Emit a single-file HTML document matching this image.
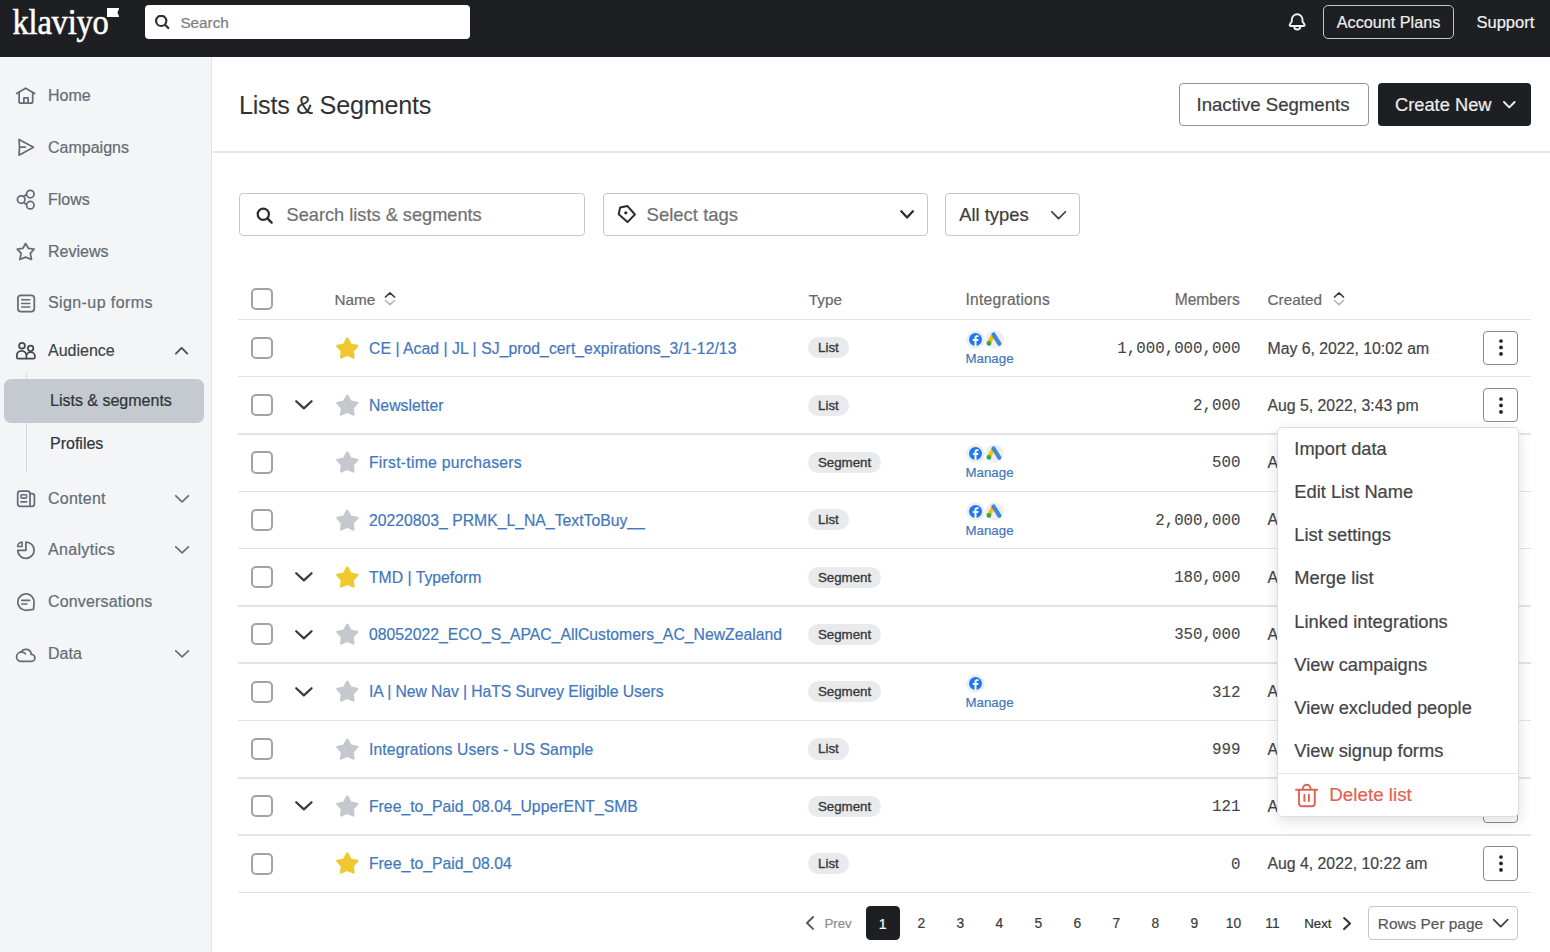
<!DOCTYPE html>
<html><head><meta charset="utf-8"><style>
html,body{margin:0;padding:0;width:1550px;height:952px;overflow:hidden;background:#fff;}
body{position:relative;font-family:"Liberation Sans", sans-serif;}
.t{position:absolute;line-height:1;white-space:nowrap;-webkit-text-stroke:0.2px currentColor;}
.r{position:absolute;display:block;}
</style></head><body>
<div class="r" style="left:0.00px;top:0.00px;width:1550.00px;height:56.50px;background:#1e1f22"></div>
<div class="t" style="left:12.50px;top:6.58px;font-size:32.5px;color:#fff;font-weight:400;font-family:'Liberation Serif', serif;transform:scaleY(1.12);transform-origin:0 80%;letter-spacing:-0.2px;-webkit-text-stroke:0.5px #fff">klaviyo</div>
<svg class="r" style="left:106.80px;top:7.90px;" width="12.4" height="9.2" viewBox="0 0 12.4 9.2" fill="none"><path d="M0 0H12.4L10.4 4.6L12.4 9.2H0Z" fill="#fff"/></svg>
<div class="r" style="left:145.30px;top:5.30px;width:324.70px;height:33.50px;background:#fff;border-radius:4px"></div>
<svg class="r" style="left:150.00px;top:15.00px;" width="20" height="20" viewBox="150 15 20 20" fill="none"><circle cx="161.2" cy="20.9" r="5.1" stroke="#303134" stroke-width="2.2"/><path d="M165 24.7L168.3 28" stroke="#303134" stroke-width="2.3" stroke-linecap="round"/></svg>
<div class="t" style="left:180.40px;top:14.95px;font-size:15.3px;color:#7b7c7e;font-weight:400;">Search</div>
<svg class="r" style="left:1280px;top:5px" width="30" height="35" viewBox="1280 5 30 35" fill="none"><path d="M1291.8 21.5V19.6A5.35 5.35 0 0 1 1302.5 19.6V21.5L1304.4 24.3Q1305.2 26 1303.4 26H1290.9Q1289.1 26 1289.9 24.3Z" stroke="#f0f0f0" stroke-width="1.9" stroke-linejoin="round"/><path d="M1294.2 26.4A3.05 3.05 0 0 0 1300.3 26.4" stroke="#f0f0f0" stroke-width="1.9" stroke-linecap="round"/></svg>
<div class="r" style="left:1322.90px;top:4.90px;width:131.30px;height:34.50px;border:1.7px solid #c4c5c7;border-radius:5px;box-sizing:border-box"></div>
<div class="t" style="left:1336.80px;top:14.19px;font-size:16.2px;color:#efefef;font-weight:400;">Account Plans</div>
<div class="t" style="left:1476.50px;top:14.13px;font-size:16.5px;color:#efefef;font-weight:400;">Support</div>
<div class="r" style="left:0.00px;top:56.50px;width:212.00px;height:895.50px;background:#f4f5f7"></div>
<div class="r" style="left:211.00px;top:56.50px;width:1.40px;height:895.50px;background:#e3e5e8"></div>
<div class="t" style="left:48.00px;top:88.06px;font-size:16px;color:#636c75;font-weight:400;letter-spacing:0px">Home</div>
<div class="t" style="left:48.00px;top:140.06px;font-size:16px;color:#636c75;font-weight:400;letter-spacing:0px">Campaigns</div>
<div class="t" style="left:48.00px;top:191.76px;font-size:16px;color:#636c75;font-weight:400;letter-spacing:0px">Flows</div>
<div class="t" style="left:48.00px;top:243.66px;font-size:16px;color:#636c75;font-weight:400;letter-spacing:0px">Reviews</div>
<div class="t" style="left:48.00px;top:295.46px;font-size:16px;color:#636c75;font-weight:400;letter-spacing:0.4px">Sign-up forms</div>
<div class="t" style="left:48.00px;top:343.06px;font-size:16px;color:#3e444a;font-weight:400;letter-spacing:0px">Audience</div>
<div class="t" style="left:48.00px;top:490.66px;font-size:16px;color:#636c75;font-weight:400;letter-spacing:0.25px">Content</div>
<div class="t" style="left:48.00px;top:542.06px;font-size:16px;color:#636c75;font-weight:400;letter-spacing:0.33px">Analytics</div>
<div class="t" style="left:48.00px;top:594.36px;font-size:16px;color:#636c75;font-weight:400;letter-spacing:0.17px">Conversations</div>
<div class="t" style="left:48.00px;top:646.26px;font-size:16px;color:#636c75;font-weight:400;letter-spacing:0px">Data</div>
<svg class="r" style="left:0;top:0" width="60" height="700" viewBox="0 0 60 700" fill="none">
<path d="M16.6 93.5L25.6 88.2L34.7 93.5" stroke="#646d77" stroke-width="1.75" stroke-linecap="round" stroke-linejoin="round"/>
<path d="M19.1 91.8V101.5Q19.1 103.2 20.8 103.2H31Q32.7 103.2 32.7 101.5V91.8M23.9 103.2V97.8H28.1V103.2" stroke="#646d77" stroke-width="1.75" stroke-linejoin="round"/>
<path d="M19 139.5L33.5 147.2L19 155.2Q20.1 147.2 19 139.5ZM19.9 147.2H25.3" stroke="#646d77" stroke-width="1.75" stroke-linejoin="round" stroke-linecap="round"/>
<circle cx="21.2" cy="199.5" r="3.75" stroke="#646d77" stroke-width="1.75"/>
<circle cx="30.3" cy="194.1" r="3.75" stroke="#646d77" stroke-width="1.75"/>
<circle cx="30.3" cy="205.2" r="3.75" stroke="#646d77" stroke-width="1.75"/>
<path d="M23.5 196.5L26.8 194.4M23.5 202.5L26.8 204.5" stroke="#646d77" stroke-width="1.75"/>
<path d="M25.6 243.5L28.4 248.3L34.1 249.2L30.3 253.4L31.5 259.5L25.6 257.1L19.9 259.5L21.1 253.4L17.3 249.2L22.9 248.3Z" stroke="#646d77" stroke-width="1.75" stroke-linejoin="round"/>
<rect x="17.9" y="295.3" width="16.4" height="16.2" rx="3" stroke="#646d77" stroke-width="1.75"/>
<path d="M21.7 299.7H29.9M21.7 303.4H29.9M21.7 307H29.9" stroke="#646d77" stroke-width="1.5" stroke-linecap="round"/>
<circle cx="22" cy="345.8" r="2.9" stroke="#44484d" stroke-width="1.75"/>
<circle cx="30.6" cy="348.3" r="2.75" stroke="#44484d" stroke-width="1.75"/>
<path d="M26.4 358.7H18.3Q16.8 358.7 16.8 357.2V355.6A4.8 4.8 0 0 1 26.4 355.6V358.7M26.4 356.3A4.25 4.25 0 0 1 34.9 356.3V357.2Q34.9 358.7 33.4 358.7H26.4" stroke="#44484d" stroke-width="1.75" stroke-linejoin="round"/>
<path d="M30 506.3H20.2Q17.7 506.3 17.7 503.8V493.5Q17.7 491 20.2 491H27.5Q30 491 30 493.5V506.3M30 493.6H32Q34.4 493.6 34.4 496V504Q34.4 506.3 32 506.3H30" stroke="#646d77" stroke-width="1.75" stroke-linejoin="round"/>
<rect x="20.9" y="494.8" width="5.8" height="3.3" rx="1" stroke="#646d77" stroke-width="1.6"/>
<path d="M20.9 501.9H26.7" stroke="#646d77" stroke-width="1.6" stroke-linecap="round"/>
<path d="M25.9 542A8.2 8.2 0 1 1 17.7 550.3H25.9Z" stroke="#646d77" stroke-width="1.75" stroke-linejoin="round"/>
<path d="M17.6 546.5H22.1V542.1A4.5 4.5 0 0 0 17.6 546.5Z" stroke="#646d77" stroke-width="1.6" stroke-linejoin="round"/>
<path d="M25.9 610.3A8.2 8.2 0 1 1 34 603.8L33.5 609.4Z" stroke="#646d77" stroke-width="1.75" stroke-linejoin="round"/>
<path d="M21.7 600.4H29.7M21.7 604H26.9" stroke="#646d77" stroke-width="1.6" stroke-linecap="round"/>
<path d="M21.2 661.4A4.6 4.6 0 0 1 21.2 652.2A5.3 5.3 0 0 1 31.2 654.4A3.5 3.5 0 0 1 31.6 661.4Z" stroke="#646d77" stroke-width="1.75" stroke-linejoin="round"/>
<path d="M20.4 651.9Q23.5 651.6 25.4 653.8" stroke="#646d77" stroke-width="1.75" stroke-linecap="round"/>
</svg>
<svg class="r" style="left:173.30px;top:344.70px" width="17.20" height="11.50" viewBox="173.30 344.70 17.20 11.50" fill="none"><path d="M176.20 353.30L181.90 347.60L187.60 353.30" stroke="#4a4f55" stroke-width="1.9" stroke-linecap="round" stroke-linejoin="round"/></svg>
<svg class="r" style="left:173.10px;top:492.50px" width="18.20" height="11.60" viewBox="173.10 492.50 18.20 11.60" fill="none"><path d="M175.90 495.30L182.20 501.30L188.50 495.30" stroke="#6a737c" stroke-width="1.8" stroke-linecap="round" stroke-linejoin="round"/></svg>
<svg class="r" style="left:173.10px;top:543.90px" width="18.20" height="11.60" viewBox="173.10 543.90 18.20 11.60" fill="none"><path d="M175.90 546.70L182.20 552.70L188.50 546.70" stroke="#6a737c" stroke-width="1.8" stroke-linecap="round" stroke-linejoin="round"/></svg>
<svg class="r" style="left:173.10px;top:648.10px" width="18.20" height="11.60" viewBox="173.10 648.10 18.20 11.60" fill="none"><path d="M175.90 650.90L182.20 656.90L188.50 650.90" stroke="#6a737c" stroke-width="1.8" stroke-linecap="round" stroke-linejoin="round"/></svg>
<div class="r" style="left:26.00px;top:373.00px;width:1.30px;height:99.00px;background:#d3d6da"></div>
<div class="r" style="left:4.20px;top:379.20px;width:199.60px;height:43.70px;background:#c5c9d0;border-radius:7px"></div>
<div class="t" style="left:50.00px;top:393.06px;font-size:16px;color:#2f3439;font-weight:400;">Lists &amp; segments</div>
<div class="t" style="left:50.00px;top:436.16px;font-size:16px;color:#2f3439;font-weight:400;">Profiles</div>
<div class="t" style="left:239.00px;top:93.17px;font-size:25.2px;color:#313235;font-weight:400;letter-spacing:-0.25px;-webkit-text-stroke:0">Lists &amp; Segments</div>
<div class="r" style="left:213.00px;top:151.00px;width:1337.00px;height:1.50px;background:#e4e6ea"></div>
<div class="r" style="left:1179.00px;top:83.00px;width:189.50px;height:42.70px;border:1.7px solid #939497;border-radius:4px;box-sizing:border-box;background:#fff"></div>
<div class="t" style="left:1196.50px;top:95.76px;font-size:18.6px;color:#3a3b3e;font-weight:400;">Inactive Segments</div>
<div class="r" style="left:1377.60px;top:83.00px;width:153.40px;height:42.70px;background:#1e1f22;border-radius:4px"></div>
<div class="t" style="left:1395.00px;top:96.01px;font-size:18.3px;color:#ececec;font-weight:400;">Create New</div>
<svg class="r" style="left:1501.45px;top:98.55px" width="16.60" height="11.40" viewBox="1501.45 98.55 16.60 11.40" fill="none"><path d="M1504.45 101.55L1509.75 106.95L1515.05 101.55" stroke="#ececec" stroke-width="2" stroke-linecap="round" stroke-linejoin="round"/></svg>
<div class="r" style="left:238.60px;top:193.30px;width:346.40px;height:43.20px;border:1.5px solid #c6c7c9;border-radius:4px;box-sizing:border-box;background:#fff"></div>
<div class="r" style="left:603.20px;top:193.30px;width:324.80px;height:43.20px;border:1.5px solid #c6c7c9;border-radius:4px;box-sizing:border-box;background:#fff"></div>
<div class="r" style="left:945.40px;top:193.30px;width:134.20px;height:43.20px;border:1.5px solid #c6c7c9;border-radius:4px;box-sizing:border-box;background:#fff"></div>
<svg class="r" style="left:255.50px;top:207.00px;" width="18" height="17" viewBox="0 0 18 17" fill="none"><circle cx="7.3" cy="7.3" r="5.6" stroke="#2b2c2e" stroke-width="2.2"/><path d="M11.4 11.4L15.6 15.6" stroke="#2b2c2e" stroke-width="2.4" stroke-linecap="round"/></svg>
<div class="t" style="left:286.60px;top:206.39px;font-size:18.2px;color:#6f7072;font-weight:400;">Search lists &amp; segments</div>
<svg class="r" style="left:600px;top:190px" width="50" height="50" viewBox="600 190 50 50" fill="none"><path d="M620.1 207.6L627.6 206.1L634.9 214.5L627.5 222.1L618.7 214.2Z" stroke="#2b2c2e" stroke-width="2" stroke-linejoin="round"/><circle cx="625.8" cy="212.8" r="1.6" fill="#2b2c2e"/></svg>
<div class="t" style="left:646.60px;top:206.14px;font-size:18.5px;color:#6f7072;font-weight:400;">Select tags</div>
<svg class="r" style="left:897.50px;top:208.30px" width="18.20" height="12.80" viewBox="897.50 208.30 18.20 12.80" fill="none"><path d="M900.80 211.60L906.60 217.80L912.40 211.60" stroke="#2b2c2e" stroke-width="2.3" stroke-linecap="round" stroke-linejoin="round"/></svg>
<div class="t" style="left:959.20px;top:206.22px;font-size:18.4px;color:#3c3d40;font-weight:400;">All types</div>
<svg class="r" style="left:1048.70px;top:208.85px" width="19.20" height="12.30" viewBox="1048.70 208.85 19.20 12.30" fill="none"><path d="M1051.45 211.60L1058.30 218.40L1065.15 211.60" stroke="#3c3d40" stroke-width="1.75" stroke-linecap="round" stroke-linejoin="round"/></svg>
<div class="r" style="left:251.20px;top:287.95px;width:21.90px;height:22.20px;border:2px solid #a2a3a5;border-radius:5px;box-sizing:border-box;background:#fff"></div>
<div class="t" style="left:334.50px;top:291.85px;font-size:15.3px;color:#67686b;font-weight:400;">Name</div>
<svg class="r" style="left:384.00px;top:291.00px;" width="12" height="15.5" viewBox="0 0 12 15.5" fill="none"><path d="M1.5 6L6 1.8L10.5 6" stroke="#3a3b3d" stroke-width="1.7" stroke-linecap="round" stroke-linejoin="round"/><path d="M1.5 9.5L6 13.7L10.5 9.5" stroke="#b3b7bd" stroke-width="1.6" stroke-linecap="round" stroke-linejoin="round"/></svg>
<div class="t" style="left:808.80px;top:291.85px;font-size:15.3px;color:#67686b;font-weight:400;">Type</div>
<div class="t" style="left:965.50px;top:291.59px;font-size:15.6px;color:#67686b;font-weight:400;letter-spacing:0.25px">Integrations</div>
<div class="t" style="right:310.30px;top:291.59px;font-size:15.6px;color:#67686b;font-weight:400;">Members</div>
<div class="t" style="left:1267.50px;top:291.85px;font-size:15.3px;color:#67686b;font-weight:400;">Created</div>
<svg class="r" style="left:1332.50px;top:291.00px;" width="12" height="15.5" viewBox="0 0 12 15.5" fill="none"><path d="M1.5 6L6 1.8L10.5 6" stroke="#3a3b3d" stroke-width="1.7" stroke-linecap="round" stroke-linejoin="round"/><path d="M1.5 9.5L6 13.7L10.5 9.5" stroke="#b3b7bd" stroke-width="1.6" stroke-linecap="round" stroke-linejoin="round"/></svg>
<div class="r" style="left:238.00px;top:318.65px;width:1293.00px;height:1.50px;background:#e2e4e8"></div>
<div class="r" style="left:238.00px;top:375.95px;width:1293.00px;height:1.50px;background:#e2e4e8"></div>
<div class="r" style="left:238.00px;top:433.25px;width:1293.00px;height:1.50px;background:#e2e4e8"></div>
<div class="r" style="left:238.00px;top:490.55px;width:1293.00px;height:1.50px;background:#e2e4e8"></div>
<div class="r" style="left:238.00px;top:547.85px;width:1293.00px;height:1.50px;background:#e2e4e8"></div>
<div class="r" style="left:238.00px;top:605.15px;width:1293.00px;height:1.50px;background:#e2e4e8"></div>
<div class="r" style="left:238.00px;top:662.45px;width:1293.00px;height:1.50px;background:#e2e4e8"></div>
<div class="r" style="left:238.00px;top:719.75px;width:1293.00px;height:1.50px;background:#e2e4e8"></div>
<div class="r" style="left:238.00px;top:777.05px;width:1293.00px;height:1.50px;background:#e2e4e8"></div>
<div class="r" style="left:238.00px;top:834.35px;width:1293.00px;height:1.50px;background:#e2e4e8"></div>
<div class="r" style="left:238.00px;top:891.65px;width:1293.00px;height:1.50px;background:#e2e4e8"></div>
<div class="r" style="left:251.20px;top:336.80px;width:21.90px;height:22.20px;border:2px solid #a2a3a5;border-radius:5px;box-sizing:border-box;background:#fff"></div>
<svg class="r" style="left:335.50px;top:336.60px;" width="23" height="24" viewBox="0 0 23 24" fill="none"><path d="M11.30 1.70L14.59 7.57L21.19 8.89L16.63 13.83L17.41 20.51L11.30 17.70L5.19 20.51L5.97 13.83L1.41 8.89L8.01 7.57Z" fill="#efc72f" stroke="#efc72f" stroke-width="2.4" stroke-linejoin="round"/></svg>
<div class="t" style="left:369.00px;top:340.67px;font-size:15.75px;color:#4277bc;font-weight:400;letter-spacing:0.04px">CE | Acad | JL | SJ_prod_cert_expirations_3/1-12/13</div>
<div class="r" style="left:807.80px;top:337.30px;width:41.20px;height:21.20px;background:#e8eaed;border-radius:11px"></div>
<div class="t" style="left:828.40px;top:341.34px;font-size:13.3px;color:#38393b;font-weight:400;transform:translateX(-50%);-webkit-text-stroke:0.35px #38393b">List</div>
<svg class="r" style="left:966.40px;top:329.80px;" width="19" height="19" viewBox="0 0 19 19" fill="none"><circle cx="9.5" cy="9.5" r="9.3" fill="#eceef1"/><circle cx="9.5" cy="9.5" r="6.5" fill="#1f78ef"/><path d="M10.5 16V11H12.2L12.45 9.1H10.5V7.9C10.5 7.35 10.7 7 11.45 7H12.5V5.3C12.3 5.25 11.65 5.2 11 5.2C9.5 5.2 8.5 6.1 8.5 7.7V9.1H6.8V11H8.5V16Z" fill="#fff"/></svg>
<svg class="r" style="left:984.50px;top:329.80px;" width="19" height="19" viewBox="0 0 19 19" fill="none"><circle cx="9.5" cy="9.5" r="9.3" fill="#eceef1"/><path d="M8.3 5L4.3 12.5" stroke="#fbbc04" stroke-width="4" stroke-linecap="round"/><path d="M8.6 4.5L14.3 13.7" stroke="#3d87db" stroke-width="4.2" stroke-linecap="round"/><circle cx="3.9" cy="13.4" r="2.4" fill="#34a853"/></svg>
<div class="t" style="left:965.50px;top:351.84px;font-size:13.3px;color:#4277bc;font-weight:400;">Manage</div>
<div class="t" style="right:309.50px;top:341.80px;font-size:15.8px;color:#454649;font-weight:400;font-family:'Liberation Mono', monospace;-webkit-text-stroke:0.1px #454649">1,000,000,000</div>
<div class="t" style="left:1267.50px;top:340.53px;font-size:15.8px;color:#434447;font-weight:400;">May 6, 2022, 10:02 am</div>
<div class="r" style="left:1483.30px;top:330.70px;width:35.20px;height:34.20px;border:1.5px solid #8a8b8e;border-radius:4px;box-sizing:border-box;background:#fff"></div>
<svg class="r" style="left:1498.90px;top:339.45px;" width="4" height="17" viewBox="0 0 4 17" fill="none"><circle cx="2" cy="2" r="1.85" fill="#1e1f22"/><circle cx="2" cy="8.45" r="1.85" fill="#1e1f22"/><circle cx="2" cy="14.9" r="1.85" fill="#1e1f22"/></svg>
<div class="r" style="left:251.20px;top:394.10px;width:21.90px;height:22.20px;border:2px solid #a2a3a5;border-radius:5px;box-sizing:border-box;background:#fff"></div>
<svg class="r" style="left:292.70px;top:398.30px" width="21.80" height="13.60" viewBox="292.70 398.30 21.80 13.60" fill="none"><path d="M295.90 401.50L303.60 408.70L311.30 401.50" stroke="#38393b" stroke-width="2.2" stroke-linecap="round" stroke-linejoin="round"/></svg>
<svg class="r" style="left:335.50px;top:393.90px;" width="23" height="24" viewBox="0 0 23 24" fill="none"><path d="M11.30 1.70L14.59 7.57L21.19 8.89L16.63 13.83L17.41 20.51L11.30 17.70L5.19 20.51L5.97 13.83L1.41 8.89L8.01 7.57Z" fill="#c5c9cf" stroke="#c5c9cf" stroke-width="2.4" stroke-linejoin="round"/></svg>
<div class="t" style="left:369.00px;top:397.97px;font-size:15.75px;color:#4277bc;font-weight:400;letter-spacing:0px">Newsletter</div>
<div class="r" style="left:807.80px;top:394.60px;width:41.20px;height:21.20px;background:#e8eaed;border-radius:11px"></div>
<div class="t" style="left:828.40px;top:398.64px;font-size:13.3px;color:#38393b;font-weight:400;transform:translateX(-50%);-webkit-text-stroke:0.35px #38393b">List</div>
<div class="t" style="right:309.50px;top:399.10px;font-size:15.8px;color:#454649;font-weight:400;font-family:'Liberation Mono', monospace;-webkit-text-stroke:0.1px #454649">2,000</div>
<div class="t" style="left:1267.50px;top:397.83px;font-size:15.8px;color:#434447;font-weight:400;">Aug 5, 2022, 3:43 pm</div>
<div class="r" style="left:1483.30px;top:388.00px;width:35.20px;height:34.20px;border:1.5px solid #8a8b8e;border-radius:4px;box-sizing:border-box;background:#fff"></div>
<svg class="r" style="left:1498.90px;top:396.75px;" width="4" height="17" viewBox="0 0 4 17" fill="none"><circle cx="2" cy="2" r="1.85" fill="#1e1f22"/><circle cx="2" cy="8.45" r="1.85" fill="#1e1f22"/><circle cx="2" cy="14.9" r="1.85" fill="#1e1f22"/></svg>
<div class="r" style="left:251.20px;top:451.40px;width:21.90px;height:22.20px;border:2px solid #a2a3a5;border-radius:5px;box-sizing:border-box;background:#fff"></div>
<svg class="r" style="left:335.50px;top:451.20px;" width="23" height="24" viewBox="0 0 23 24" fill="none"><path d="M11.30 1.70L14.59 7.57L21.19 8.89L16.63 13.83L17.41 20.51L11.30 17.70L5.19 20.51L5.97 13.83L1.41 8.89L8.01 7.57Z" fill="#c5c9cf" stroke="#c5c9cf" stroke-width="2.4" stroke-linejoin="round"/></svg>
<div class="t" style="left:369.00px;top:455.27px;font-size:15.75px;color:#4277bc;font-weight:400;letter-spacing:0.24px">First-time purchasers</div>
<div class="r" style="left:807.80px;top:451.90px;width:73.50px;height:21.20px;background:#e8eaed;border-radius:11px"></div>
<div class="t" style="left:844.55px;top:455.94px;font-size:13.3px;color:#38393b;font-weight:400;transform:translateX(-50%);-webkit-text-stroke:0.35px #38393b">Segment</div>
<svg class="r" style="left:966.40px;top:444.40px;" width="19" height="19" viewBox="0 0 19 19" fill="none"><circle cx="9.5" cy="9.5" r="9.3" fill="#eceef1"/><circle cx="9.5" cy="9.5" r="6.5" fill="#1f78ef"/><path d="M10.5 16V11H12.2L12.45 9.1H10.5V7.9C10.5 7.35 10.7 7 11.45 7H12.5V5.3C12.3 5.25 11.65 5.2 11 5.2C9.5 5.2 8.5 6.1 8.5 7.7V9.1H6.8V11H8.5V16Z" fill="#fff"/></svg>
<svg class="r" style="left:984.50px;top:444.40px;" width="19" height="19" viewBox="0 0 19 19" fill="none"><circle cx="9.5" cy="9.5" r="9.3" fill="#eceef1"/><path d="M8.3 5L4.3 12.5" stroke="#fbbc04" stroke-width="4" stroke-linecap="round"/><path d="M8.6 4.5L14.3 13.7" stroke="#3d87db" stroke-width="4.2" stroke-linecap="round"/><circle cx="3.9" cy="13.4" r="2.4" fill="#34a853"/></svg>
<div class="t" style="left:965.50px;top:466.44px;font-size:13.3px;color:#4277bc;font-weight:400;">Manage</div>
<div class="t" style="right:309.50px;top:456.40px;font-size:15.8px;color:#454649;font-weight:400;font-family:'Liberation Mono', monospace;-webkit-text-stroke:0.1px #454649">500</div>
<div class="t" style="left:1267.50px;top:455.13px;font-size:15.8px;color:#434447;font-weight:400;">Aug 5, 2022, 3:43 pm</div>
<div class="r" style="left:1483.30px;top:445.30px;width:35.20px;height:34.20px;border:1.5px solid #8a8b8e;border-radius:4px;box-sizing:border-box;background:#fff"></div>
<svg class="r" style="left:1498.90px;top:454.05px;" width="4" height="17" viewBox="0 0 4 17" fill="none"><circle cx="2" cy="2" r="1.85" fill="#1e1f22"/><circle cx="2" cy="8.45" r="1.85" fill="#1e1f22"/><circle cx="2" cy="14.9" r="1.85" fill="#1e1f22"/></svg>
<div class="r" style="left:251.20px;top:508.70px;width:21.90px;height:22.20px;border:2px solid #a2a3a5;border-radius:5px;box-sizing:border-box;background:#fff"></div>
<svg class="r" style="left:335.50px;top:508.50px;" width="23" height="24" viewBox="0 0 23 24" fill="none"><path d="M11.30 1.70L14.59 7.57L21.19 8.89L16.63 13.83L17.41 20.51L11.30 17.70L5.19 20.51L5.97 13.83L1.41 8.89L8.01 7.57Z" fill="#c5c9cf" stroke="#c5c9cf" stroke-width="2.4" stroke-linejoin="round"/></svg>
<div class="t" style="left:369.00px;top:512.57px;font-size:15.75px;color:#4277bc;font-weight:400;letter-spacing:0px">20220803_ PRMK_L_NA_TextToBuy__</div>
<div class="r" style="left:807.80px;top:509.20px;width:41.20px;height:21.20px;background:#e8eaed;border-radius:11px"></div>
<div class="t" style="left:828.40px;top:513.24px;font-size:13.3px;color:#38393b;font-weight:400;transform:translateX(-50%);-webkit-text-stroke:0.35px #38393b">List</div>
<svg class="r" style="left:966.40px;top:501.70px;" width="19" height="19" viewBox="0 0 19 19" fill="none"><circle cx="9.5" cy="9.5" r="9.3" fill="#eceef1"/><circle cx="9.5" cy="9.5" r="6.5" fill="#1f78ef"/><path d="M10.5 16V11H12.2L12.45 9.1H10.5V7.9C10.5 7.35 10.7 7 11.45 7H12.5V5.3C12.3 5.25 11.65 5.2 11 5.2C9.5 5.2 8.5 6.1 8.5 7.7V9.1H6.8V11H8.5V16Z" fill="#fff"/></svg>
<svg class="r" style="left:984.50px;top:501.70px;" width="19" height="19" viewBox="0 0 19 19" fill="none"><circle cx="9.5" cy="9.5" r="9.3" fill="#eceef1"/><path d="M8.3 5L4.3 12.5" stroke="#fbbc04" stroke-width="4" stroke-linecap="round"/><path d="M8.6 4.5L14.3 13.7" stroke="#3d87db" stroke-width="4.2" stroke-linecap="round"/><circle cx="3.9" cy="13.4" r="2.4" fill="#34a853"/></svg>
<div class="t" style="left:965.50px;top:523.74px;font-size:13.3px;color:#4277bc;font-weight:400;">Manage</div>
<div class="t" style="right:309.50px;top:513.70px;font-size:15.8px;color:#454649;font-weight:400;font-family:'Liberation Mono', monospace;-webkit-text-stroke:0.1px #454649">2,000,000</div>
<div class="t" style="left:1267.50px;top:512.43px;font-size:15.8px;color:#434447;font-weight:400;">Aug 5, 2022, 3:43 pm</div>
<div class="r" style="left:1483.30px;top:502.60px;width:35.20px;height:34.20px;border:1.5px solid #8a8b8e;border-radius:4px;box-sizing:border-box;background:#fff"></div>
<svg class="r" style="left:1498.90px;top:511.35px;" width="4" height="17" viewBox="0 0 4 17" fill="none"><circle cx="2" cy="2" r="1.85" fill="#1e1f22"/><circle cx="2" cy="8.45" r="1.85" fill="#1e1f22"/><circle cx="2" cy="14.9" r="1.85" fill="#1e1f22"/></svg>
<div class="r" style="left:251.20px;top:566.00px;width:21.90px;height:22.20px;border:2px solid #a2a3a5;border-radius:5px;box-sizing:border-box;background:#fff"></div>
<svg class="r" style="left:292.70px;top:570.20px" width="21.80" height="13.60" viewBox="292.70 570.20 21.80 13.60" fill="none"><path d="M295.90 573.40L303.60 580.60L311.30 573.40" stroke="#38393b" stroke-width="2.2" stroke-linecap="round" stroke-linejoin="round"/></svg>
<svg class="r" style="left:335.50px;top:565.80px;" width="23" height="24" viewBox="0 0 23 24" fill="none"><path d="M11.30 1.70L14.59 7.57L21.19 8.89L16.63 13.83L17.41 20.51L11.30 17.70L5.19 20.51L5.97 13.83L1.41 8.89L8.01 7.57Z" fill="#efc72f" stroke="#efc72f" stroke-width="2.4" stroke-linejoin="round"/></svg>
<div class="t" style="left:369.00px;top:569.87px;font-size:15.75px;color:#4277bc;font-weight:400;letter-spacing:0px">TMD | Typeform</div>
<div class="r" style="left:807.80px;top:566.50px;width:73.50px;height:21.20px;background:#e8eaed;border-radius:11px"></div>
<div class="t" style="left:844.55px;top:570.54px;font-size:13.3px;color:#38393b;font-weight:400;transform:translateX(-50%);-webkit-text-stroke:0.35px #38393b">Segment</div>
<div class="t" style="right:309.50px;top:571.00px;font-size:15.8px;color:#454649;font-weight:400;font-family:'Liberation Mono', monospace;-webkit-text-stroke:0.1px #454649">180,000</div>
<div class="t" style="left:1267.50px;top:569.73px;font-size:15.8px;color:#434447;font-weight:400;">Aug 5, 2022, 3:43 pm</div>
<div class="r" style="left:1483.30px;top:559.90px;width:35.20px;height:34.20px;border:1.5px solid #8a8b8e;border-radius:4px;box-sizing:border-box;background:#fff"></div>
<svg class="r" style="left:1498.90px;top:568.65px;" width="4" height="17" viewBox="0 0 4 17" fill="none"><circle cx="2" cy="2" r="1.85" fill="#1e1f22"/><circle cx="2" cy="8.45" r="1.85" fill="#1e1f22"/><circle cx="2" cy="14.9" r="1.85" fill="#1e1f22"/></svg>
<div class="r" style="left:251.20px;top:623.30px;width:21.90px;height:22.20px;border:2px solid #a2a3a5;border-radius:5px;box-sizing:border-box;background:#fff"></div>
<svg class="r" style="left:292.70px;top:627.50px" width="21.80" height="13.60" viewBox="292.70 627.50 21.80 13.60" fill="none"><path d="M295.90 630.70L303.60 637.90L311.30 630.70" stroke="#38393b" stroke-width="2.2" stroke-linecap="round" stroke-linejoin="round"/></svg>
<svg class="r" style="left:335.50px;top:623.10px;" width="23" height="24" viewBox="0 0 23 24" fill="none"><path d="M11.30 1.70L14.59 7.57L21.19 8.89L16.63 13.83L17.41 20.51L11.30 17.70L5.19 20.51L5.97 13.83L1.41 8.89L8.01 7.57Z" fill="#c5c9cf" stroke="#c5c9cf" stroke-width="2.4" stroke-linejoin="round"/></svg>
<div class="t" style="left:369.00px;top:627.17px;font-size:15.75px;color:#4277bc;font-weight:400;letter-spacing:0px">08052022_ECO_S_APAC_AllCustomers_AC_NewZealand</div>
<div class="r" style="left:807.80px;top:623.80px;width:73.50px;height:21.20px;background:#e8eaed;border-radius:11px"></div>
<div class="t" style="left:844.55px;top:627.84px;font-size:13.3px;color:#38393b;font-weight:400;transform:translateX(-50%);-webkit-text-stroke:0.35px #38393b">Segment</div>
<div class="t" style="right:309.50px;top:628.30px;font-size:15.8px;color:#454649;font-weight:400;font-family:'Liberation Mono', monospace;-webkit-text-stroke:0.1px #454649">350,000</div>
<div class="t" style="left:1267.50px;top:627.03px;font-size:15.8px;color:#434447;font-weight:400;">Aug 5, 2022, 3:43 pm</div>
<div class="r" style="left:1483.30px;top:617.20px;width:35.20px;height:34.20px;border:1.5px solid #8a8b8e;border-radius:4px;box-sizing:border-box;background:#fff"></div>
<svg class="r" style="left:1498.90px;top:625.95px;" width="4" height="17" viewBox="0 0 4 17" fill="none"><circle cx="2" cy="2" r="1.85" fill="#1e1f22"/><circle cx="2" cy="8.45" r="1.85" fill="#1e1f22"/><circle cx="2" cy="14.9" r="1.85" fill="#1e1f22"/></svg>
<div class="r" style="left:251.20px;top:680.60px;width:21.90px;height:22.20px;border:2px solid #a2a3a5;border-radius:5px;box-sizing:border-box;background:#fff"></div>
<svg class="r" style="left:292.70px;top:684.80px" width="21.80" height="13.60" viewBox="292.70 684.80 21.80 13.60" fill="none"><path d="M295.90 688.00L303.60 695.20L311.30 688.00" stroke="#38393b" stroke-width="2.2" stroke-linecap="round" stroke-linejoin="round"/></svg>
<svg class="r" style="left:335.50px;top:680.40px;" width="23" height="24" viewBox="0 0 23 24" fill="none"><path d="M11.30 1.70L14.59 7.57L21.19 8.89L16.63 13.83L17.41 20.51L11.30 17.70L5.19 20.51L5.97 13.83L1.41 8.89L8.01 7.57Z" fill="#c5c9cf" stroke="#c5c9cf" stroke-width="2.4" stroke-linejoin="round"/></svg>
<div class="t" style="left:369.00px;top:684.47px;font-size:15.75px;color:#4277bc;font-weight:400;letter-spacing:-0.085px">IA | New Nav | HaTS Survey Eligible Users</div>
<div class="r" style="left:807.80px;top:681.10px;width:73.50px;height:21.20px;background:#e8eaed;border-radius:11px"></div>
<div class="t" style="left:844.55px;top:685.14px;font-size:13.3px;color:#38393b;font-weight:400;transform:translateX(-50%);-webkit-text-stroke:0.35px #38393b">Segment</div>
<svg class="r" style="left:966.40px;top:673.60px;" width="19" height="19" viewBox="0 0 19 19" fill="none"><circle cx="9.5" cy="9.5" r="9.3" fill="#eceef1"/><circle cx="9.5" cy="9.5" r="6.5" fill="#1f78ef"/><path d="M10.5 16V11H12.2L12.45 9.1H10.5V7.9C10.5 7.35 10.7 7 11.45 7H12.5V5.3C12.3 5.25 11.65 5.2 11 5.2C9.5 5.2 8.5 6.1 8.5 7.7V9.1H6.8V11H8.5V16Z" fill="#fff"/></svg>
<div class="t" style="left:965.50px;top:695.64px;font-size:13.3px;color:#4277bc;font-weight:400;">Manage</div>
<div class="t" style="right:309.50px;top:685.60px;font-size:15.8px;color:#454649;font-weight:400;font-family:'Liberation Mono', monospace;-webkit-text-stroke:0.1px #454649">312</div>
<div class="t" style="left:1267.50px;top:684.33px;font-size:15.8px;color:#434447;font-weight:400;">Aug 5, 2022, 3:43 pm</div>
<div class="r" style="left:1483.30px;top:674.50px;width:35.20px;height:34.20px;border:1.5px solid #8a8b8e;border-radius:4px;box-sizing:border-box;background:#fff"></div>
<svg class="r" style="left:1498.90px;top:683.25px;" width="4" height="17" viewBox="0 0 4 17" fill="none"><circle cx="2" cy="2" r="1.85" fill="#1e1f22"/><circle cx="2" cy="8.45" r="1.85" fill="#1e1f22"/><circle cx="2" cy="14.9" r="1.85" fill="#1e1f22"/></svg>
<div class="r" style="left:251.20px;top:737.90px;width:21.90px;height:22.20px;border:2px solid #a2a3a5;border-radius:5px;box-sizing:border-box;background:#fff"></div>
<svg class="r" style="left:335.50px;top:737.70px;" width="23" height="24" viewBox="0 0 23 24" fill="none"><path d="M11.30 1.70L14.59 7.57L21.19 8.89L16.63 13.83L17.41 20.51L11.30 17.70L5.19 20.51L5.97 13.83L1.41 8.89L8.01 7.57Z" fill="#c5c9cf" stroke="#c5c9cf" stroke-width="2.4" stroke-linejoin="round"/></svg>
<div class="t" style="left:369.00px;top:741.77px;font-size:15.75px;color:#4277bc;font-weight:400;letter-spacing:0.1px">Integrations Users - US Sample</div>
<div class="r" style="left:807.80px;top:738.40px;width:41.20px;height:21.20px;background:#e8eaed;border-radius:11px"></div>
<div class="t" style="left:828.40px;top:742.44px;font-size:13.3px;color:#38393b;font-weight:400;transform:translateX(-50%);-webkit-text-stroke:0.35px #38393b">List</div>
<div class="t" style="right:309.50px;top:742.90px;font-size:15.8px;color:#454649;font-weight:400;font-family:'Liberation Mono', monospace;-webkit-text-stroke:0.1px #454649">999</div>
<div class="t" style="left:1267.50px;top:741.63px;font-size:15.8px;color:#434447;font-weight:400;">Aug 5, 2022, 3:43 pm</div>
<div class="r" style="left:1483.30px;top:731.80px;width:35.20px;height:34.20px;border:1.5px solid #8a8b8e;border-radius:4px;box-sizing:border-box;background:#fff"></div>
<svg class="r" style="left:1498.90px;top:740.55px;" width="4" height="17" viewBox="0 0 4 17" fill="none"><circle cx="2" cy="2" r="1.85" fill="#1e1f22"/><circle cx="2" cy="8.45" r="1.85" fill="#1e1f22"/><circle cx="2" cy="14.9" r="1.85" fill="#1e1f22"/></svg>
<div class="r" style="left:251.20px;top:795.20px;width:21.90px;height:22.20px;border:2px solid #a2a3a5;border-radius:5px;box-sizing:border-box;background:#fff"></div>
<svg class="r" style="left:292.70px;top:799.40px" width="21.80" height="13.60" viewBox="292.70 799.40 21.80 13.60" fill="none"><path d="M295.90 802.60L303.60 809.80L311.30 802.60" stroke="#38393b" stroke-width="2.2" stroke-linecap="round" stroke-linejoin="round"/></svg>
<svg class="r" style="left:335.50px;top:795.00px;" width="23" height="24" viewBox="0 0 23 24" fill="none"><path d="M11.30 1.70L14.59 7.57L21.19 8.89L16.63 13.83L17.41 20.51L11.30 17.70L5.19 20.51L5.97 13.83L1.41 8.89L8.01 7.57Z" fill="#c5c9cf" stroke="#c5c9cf" stroke-width="2.4" stroke-linejoin="round"/></svg>
<div class="t" style="left:369.00px;top:799.07px;font-size:15.75px;color:#4277bc;font-weight:400;letter-spacing:0px">Free_to_Paid_08.04_UpperENT_SMB</div>
<div class="r" style="left:807.80px;top:795.70px;width:73.50px;height:21.20px;background:#e8eaed;border-radius:11px"></div>
<div class="t" style="left:844.55px;top:799.74px;font-size:13.3px;color:#38393b;font-weight:400;transform:translateX(-50%);-webkit-text-stroke:0.35px #38393b">Segment</div>
<div class="t" style="right:309.50px;top:800.20px;font-size:15.8px;color:#454649;font-weight:400;font-family:'Liberation Mono', monospace;-webkit-text-stroke:0.1px #454649">121</div>
<div class="t" style="left:1267.50px;top:798.93px;font-size:15.8px;color:#434447;font-weight:400;">Aug 5, 2022, 3:43 pm</div>
<div class="r" style="left:1483.30px;top:789.10px;width:35.20px;height:34.20px;border:1.5px solid #8a8b8e;border-radius:4px;box-sizing:border-box;background:#fff"></div>
<svg class="r" style="left:1498.90px;top:797.85px;" width="4" height="17" viewBox="0 0 4 17" fill="none"><circle cx="2" cy="2" r="1.85" fill="#1e1f22"/><circle cx="2" cy="8.45" r="1.85" fill="#1e1f22"/><circle cx="2" cy="14.9" r="1.85" fill="#1e1f22"/></svg>
<div class="r" style="left:251.20px;top:852.50px;width:21.90px;height:22.20px;border:2px solid #a2a3a5;border-radius:5px;box-sizing:border-box;background:#fff"></div>
<svg class="r" style="left:335.50px;top:852.30px;" width="23" height="24" viewBox="0 0 23 24" fill="none"><path d="M11.30 1.70L14.59 7.57L21.19 8.89L16.63 13.83L17.41 20.51L11.30 17.70L5.19 20.51L5.97 13.83L1.41 8.89L8.01 7.57Z" fill="#efc72f" stroke="#efc72f" stroke-width="2.4" stroke-linejoin="round"/></svg>
<div class="t" style="left:369.00px;top:856.37px;font-size:15.75px;color:#4277bc;font-weight:400;letter-spacing:0px">Free_to_Paid_08.04</div>
<div class="r" style="left:807.80px;top:853.00px;width:41.20px;height:21.20px;background:#e8eaed;border-radius:11px"></div>
<div class="t" style="left:828.40px;top:857.04px;font-size:13.3px;color:#38393b;font-weight:400;transform:translateX(-50%);-webkit-text-stroke:0.35px #38393b">List</div>
<div class="t" style="right:309.50px;top:857.50px;font-size:15.8px;color:#454649;font-weight:400;font-family:'Liberation Mono', monospace;-webkit-text-stroke:0.1px #454649">0</div>
<div class="t" style="left:1267.50px;top:856.23px;font-size:15.8px;color:#434447;font-weight:400;">Aug 4, 2022, 10:22 am</div>
<div class="r" style="left:1483.30px;top:846.40px;width:35.20px;height:34.20px;border:1.5px solid #8a8b8e;border-radius:4px;box-sizing:border-box;background:#fff"></div>
<svg class="r" style="left:1498.90px;top:855.15px;" width="4" height="17" viewBox="0 0 4 17" fill="none"><circle cx="2" cy="2" r="1.85" fill="#1e1f22"/><circle cx="2" cy="8.45" r="1.85" fill="#1e1f22"/><circle cx="2" cy="14.9" r="1.85" fill="#1e1f22"/></svg>
<div class="r" style="left:1277.30px;top:427.30px;width:241.90px;height:389.60px;background:#fff;border:1px solid #dcdee2;border-radius:5px;box-sizing:border-box;box-shadow:0 4px 14px rgba(0,0,0,0.13)"></div>
<div class="t" style="left:1294.30px;top:439.51px;font-size:18.3px;color:#434447;font-weight:400;">Import data</div>
<div class="t" style="left:1294.30px;top:482.77px;font-size:18.3px;color:#434447;font-weight:400;">Edit List Name</div>
<div class="t" style="left:1294.30px;top:526.03px;font-size:18.3px;color:#434447;font-weight:400;">List settings</div>
<div class="t" style="left:1294.30px;top:569.29px;font-size:18.3px;color:#434447;font-weight:400;">Merge list</div>
<div class="t" style="left:1294.30px;top:612.55px;font-size:18.3px;color:#434447;font-weight:400;">Linked integrations</div>
<div class="t" style="left:1294.30px;top:655.81px;font-size:18.3px;color:#434447;font-weight:400;">View campaigns</div>
<div class="t" style="left:1294.30px;top:699.07px;font-size:18.3px;color:#434447;font-weight:400;">View excluded people</div>
<div class="t" style="left:1294.30px;top:742.33px;font-size:18.3px;color:#434447;font-weight:400;">View signup forms</div>
<div class="r" style="left:1278.30px;top:773.00px;width:239.90px;height:1.30px;background:#e3e5e9"></div>
<svg class="r" style="left:1280px;top:775px" width="50" height="40" viewBox="1280 775 50 40" fill="none"><path d="M1296 789.8H1317.3M1303 789.8V788.5A3.75 3.75 0 0 1 1310.5 788.5V789.8M1299 789.8V803.2Q1299 806.2 1302 806.2H1311.8Q1314.8 806.2 1314.8 803.2V789.8M1304.4 794.6V801M1308.9 794.6V801" stroke="#df6355" stroke-width="1.9" stroke-linecap="round" stroke-linejoin="round"/></svg>
<div class="t" style="left:1329.30px;top:786.09px;font-size:18.8px;color:#df6355;font-weight:400;">Delete list</div>
<svg class="r" style="left:803.80px;top:913.95px" width="12.10" height="17.90" viewBox="803.80 913.95 12.10 17.90" fill="none"><path d="M812.90 916.95L806.80 922.90L812.90 928.85" stroke="#5a5b5e" stroke-width="2.0" stroke-linecap="round" stroke-linejoin="round"/></svg>
<div class="t" style="left:824.40px;top:917.14px;font-size:13.3px;color:#8b8d90;font-weight:400;">Prev</div>
<div class="r" style="left:865.50px;top:906.20px;width:34.40px;height:34.30px;background:#1e1f22;border-radius:4.5px"></div>
<div class="t" style="left:882.80px;top:916.58px;font-size:14.2px;color:#fff;font-weight:400;transform:translateX(-50%)">1</div>
<div class="t" style="left:921.40px;top:916.72px;font-size:13.8px;color:#3a3b3e;font-weight:400;transform:translateX(-50%)">2</div>
<div class="t" style="left:960.40px;top:916.72px;font-size:13.8px;color:#3a3b3e;font-weight:400;transform:translateX(-50%)">3</div>
<div class="t" style="left:999.40px;top:916.72px;font-size:13.8px;color:#3a3b3e;font-weight:400;transform:translateX(-50%)">4</div>
<div class="t" style="left:1038.40px;top:916.72px;font-size:13.8px;color:#3a3b3e;font-weight:400;transform:translateX(-50%)">5</div>
<div class="t" style="left:1077.40px;top:916.72px;font-size:13.8px;color:#3a3b3e;font-weight:400;transform:translateX(-50%)">6</div>
<div class="t" style="left:1116.40px;top:916.72px;font-size:13.8px;color:#3a3b3e;font-weight:400;transform:translateX(-50%)">7</div>
<div class="t" style="left:1155.40px;top:916.72px;font-size:13.8px;color:#3a3b3e;font-weight:400;transform:translateX(-50%)">8</div>
<div class="t" style="left:1194.40px;top:916.72px;font-size:13.8px;color:#3a3b3e;font-weight:400;transform:translateX(-50%)">9</div>
<div class="t" style="left:1233.40px;top:916.72px;font-size:13.8px;color:#3a3b3e;font-weight:400;transform:translateX(-50%)">10</div>
<div class="t" style="left:1272.40px;top:916.72px;font-size:13.8px;color:#3a3b3e;font-weight:400;transform:translateX(-50%)">11</div>
<div class="t" style="left:1304.20px;top:917.14px;font-size:13.3px;color:#2f3033;font-weight:400;">Next</div>
<svg class="r" style="left:1340.90px;top:914.80px" width="12.10" height="17.20" viewBox="1340.90 914.80 12.10 17.20" fill="none"><path d="M1344.00 917.90L1349.90 923.40L1344.00 928.90" stroke="#333437" stroke-width="2.1" stroke-linecap="round" stroke-linejoin="round"/></svg>
<div class="r" style="left:1368.30px;top:906.30px;width:149.90px;height:34.10px;border:1.5px solid #c6c7c9;border-radius:4px;box-sizing:border-box;background:#fff"></div>
<div class="t" style="left:1377.80px;top:916.16px;font-size:15.4px;color:#56575a;font-weight:400;">Rows Per page</div>
<svg class="r" style="left:1490.80px;top:917.10px" width="19.40" height="12.40" viewBox="1490.80 917.10 19.40 12.40" fill="none"><path d="M1493.50 919.80L1500.50 926.80L1507.50 919.80" stroke="#3c3d40" stroke-width="1.7" stroke-linecap="round" stroke-linejoin="round"/></svg>
</body></html>
